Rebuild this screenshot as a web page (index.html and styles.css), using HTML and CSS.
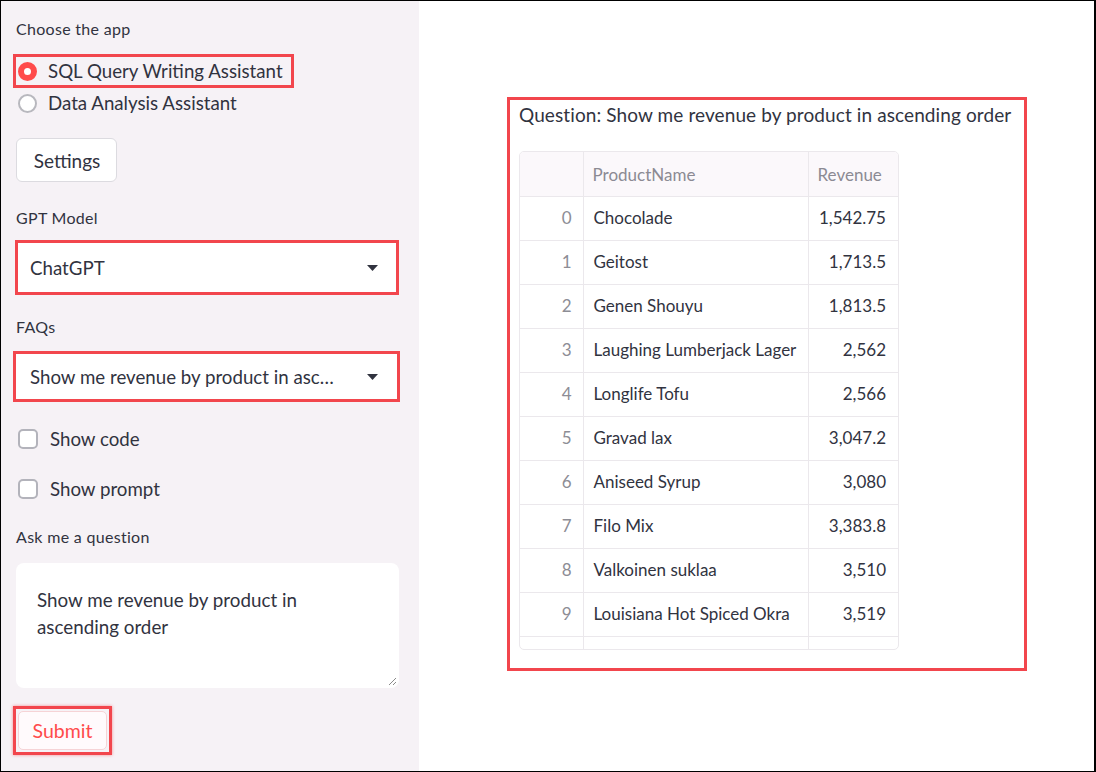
FILE: index.html
```html
<!DOCTYPE html>
<html>
<head>
<meta charset="utf-8">
<link rel="stylesheet" href="styles.css">
</head>
<body>
<div class="page">
  <aside class="sidebar">
    <div class="label l-app">Choose the app</div>
    <div class="radio-row hl-radio">
      <span class="radio checked"></span>
      <span class="radio-text">SQL Query Writing Assistant</span>
    </div>
    <div class="radio-row plain">
      <span class="radio"></span>
      <span class="radio-text">Data Analysis Assistant</span>
    </div>
    <button class="btn settings">Settings</button>
    <div class="label l-model">GPT Model</div>
    <div class="select sel-model">
      <span class="sel-text">ChatGPT</span>
      <svg class="caret" width="11" height="6" viewBox="0 0 11 6"><path d="M0 0H11L5.5 6Z" fill="#31333f"/></svg>
    </div>
    <div class="label l-faq">FAQs</div>
    <div class="select sel-faq">
      <span class="sel-text">Show me revenue by product in asc…</span>
      <svg class="caret" width="11" height="6" viewBox="0 0 11 6"><path d="M0 0H11L5.5 6Z" fill="#31333f"/></svg>
    </div>
    <div class="check-row c1">
      <span class="check"></span>
      <span class="check-text">Show code</span>
    </div>
    <div class="check-row c2">
      <span class="check"></span>
      <span class="check-text">Show prompt</span>
    </div>
    <div class="label l-ask">Ask me a question</div>
    <div class="textarea">
      <div class="ta-text">Show me revenue by product in<br>ascending order</div>
      <svg class="grip" width="10" height="10" viewBox="0 0 10 10"><path d="M9 2L2 9M9 6L6 9" stroke="#8a8a8a" stroke-width="1"/></svg>
    </div>
    <div class="submit-wrap">
      <button class="btn submit">Submit</button>
    </div>
  </aside>
  <main class="main">
    <section class="result">
      <div class="question">Question: Show me revenue by product in ascending order</div>
      <div class="table-wrap">
        <table class="df">
          <thead>
            <tr><th class="idx"></th><th class="name">ProductName</th><th class="rev">Revenue</th></tr>
          </thead>
          <tbody>
            <tr><td class="idx">0</td><td class="name">Chocolade</td><td class="rev">1,542.75</td></tr>
            <tr><td class="idx">1</td><td class="name">Geitost</td><td class="rev">1,713.5</td></tr>
            <tr><td class="idx">2</td><td class="name">Genen Shouyu</td><td class="rev">1,813.5</td></tr>
            <tr><td class="idx">3</td><td class="name">Laughing Lumberjack Lager</td><td class="rev">2,562</td></tr>
            <tr><td class="idx">4</td><td class="name">Longlife Tofu</td><td class="rev">2,566</td></tr>
            <tr><td class="idx">5</td><td class="name">Gravad lax</td><td class="rev">3,047.2</td></tr>
            <tr><td class="idx">6</td><td class="name">Aniseed Syrup</td><td class="rev">3,080</td></tr>
            <tr><td class="idx">7</td><td class="name">Filo Mix</td><td class="rev">3,383.8</td></tr>
            <tr><td class="idx">8</td><td class="name">Valkoinen suklaa</td><td class="rev">3,510</td></tr>
            <tr><td class="idx">9</td><td class="name">Louisiana Hot Spiced Okra</td><td class="rev">3,519</td></tr>
            <tr><td class="idx"></td><td class="name"></td><td class="rev"></td></tr>
          </tbody>
        </table>
      </div>
    </section>
  </main>
</div>
</body>
</html>
```

FILE: styles.css
```css
* { box-sizing: border-box; }
html, body { margin: 0; padding: 0; }
body {
  font-family: Lato, "Liberation Sans", sans-serif;
  color: #31333f;
  background: #fff;
}
.page {
  width: 1096px;
  height: 772px;
  border: 1px solid #000;
  border-right-width: 2px;
  display: flex;
  overflow: hidden;
}
.sidebar {
  width: 418px;
  flex: none;
  background: #f6f2f6;
  padding-left: 15px;
  display: flex;
  flex-direction: column;
  align-items: flex-start;
}
.label {
  font-size: 16px;
  letter-spacing: 0.3px;
  line-height: 20px;
  height: 20px;
  color: #31333f;
}
.l-app { margin-top: 18px; }
.l-model { margin-top: 26px; }
.l-faq { margin-top: 22px; }
.l-ask { margin-top: 26px; }

.radio-row {
  display: flex;
  align-items: center;
  font-size: 18.7px;
}
.hl-radio {
  margin-top: 15px;
  margin-left: -3px;
  width: 281px;
  height: 34px;
  border: 3px solid #f2464d;
  padding-left: 2px;
}
.plain {
  height: 30px;
  padding-left: 2px;
}
.radio {
  width: 19px;
  height: 19px;
  border-radius: 50%;
  border: 2px solid #b8b8be;
  background: #fff;
  flex: none;
}
.radio.checked {
  border: 6px solid #ff4b4b;
  background: #fff;
}
.radio-text { margin-left: 11px; }

.btn {
  font-family: inherit;
  background: #fff;
  color: #31333f;
  cursor: pointer;
}
.settings {
  margin-top: 20px;
  width: 101px;
  height: 44px;
  border: 1px solid #dcdbe0;
  border-radius: 6px;
  font-size: 19px;
  padding: 0 0 0 1px;
}

.select {
  display: flex;
  align-items: center;
  justify-content: space-between;
  background: #fff;
  border: 3px solid #f2464d;
  font-size: 18.7px;
}
.sel-model {
  margin-top: 12px;
  margin-left: -1px;
  width: 384px;
  height: 55px;
  padding: 0 18px 0 12px;
}
.sel-faq {
  margin-top: 14px;
  margin-left: -3px;
  width: 387px;
  height: 51px;
  padding: 0 19px 0 14px;
}
.caret { flex: none; }

.check-row {
  display: flex;
  align-items: center;
  height: 24px;
  font-size: 18.7px;
  padding-left: 2px;
}
.c1 { margin-top: 25px; }
.c2 { margin-top: 26px; }
.check {
  width: 20px;
  height: 20px;
  border: 2px solid #b3b3bb;
  border-radius: 5px;
  background: #fff;
  flex: none;
}
.check-text { margin-left: 12px; }

.textarea {
  position: relative;
  margin-top: 16px;
  width: 383px;
  height: 125px;
  background: #fff;
  border-radius: 8px;
  padding: 23px 10px 0 21px;
  font-size: 18.8px;
  line-height: 27px;
}
.grip {
  position: absolute;
  right: 2px;
  bottom: 2px;
}

.submit-wrap {
  margin-top: 18px;
  margin-left: -3px;
  width: 99px;
  height: 49px;
  border: 3px solid #f2464d;
  box-shadow: 0 0 3px rgba(242, 70, 77, 0.6);
  padding: 2px;
}
.submit {
  width: 100%;
  height: 100%;
  border: 1px solid #f6d3d6;
  border-radius: 5px;
  background: #fffafc;
  color: #ff4b4b;
  font-size: 19.5px;
  padding: 0;
}

.main {
  flex: 1;
  background: #fff;
  padding: 96px 0 0 88px;
}
.result {
  width: 520px;
  height: 574px;
  border: 3px solid #f2464d;
  padding: 3px 0 0 9px;
}
.question {
  font-size: 19px;
  letter-spacing: 0.1px;
  line-height: 24px;
  white-space: nowrap;
}
.table-wrap {
  margin-top: 24px;
  width: 380px;
  height: 499px;
  border: 1px solid #ebe8ec;
  border-radius: 5px;
  overflow: hidden;
}
.df {
  border-collapse: collapse;
  font-size: 17px;
  width: 378px;
  table-layout: fixed;
}
.df th, .df td {
  height: 44px;
  padding: 0 0 2px 0;
  border: 1px solid #ebe8ec;
  white-space: nowrap;
  overflow: hidden;
}
.df tr:first-child th { border-top: none; }
.df th:first-child, .df td:first-child { border-left: none; }
.df th:last-child, .df td:last-child { border-right: none; }
.df thead th {
  background: #fbf8fb;
  color: #8b8a93;
  font-weight: normal;
  text-align: left;
  height: 44px;
  padding-bottom: 0;
  padding-top: 2px;
}
.df .idx { width: 63px; text-align: right; padding-right: 11px; color: #8d8d95; }
.df .name { width: 225px; padding-left: 10px; }
.df .rev { width: 90px; text-align: right; padding-right: 12px; }
.df thead th.rev { text-align: left; padding-left: 9px; padding-right: 0; }
.df thead th.name { padding-left: 9px; }
```
